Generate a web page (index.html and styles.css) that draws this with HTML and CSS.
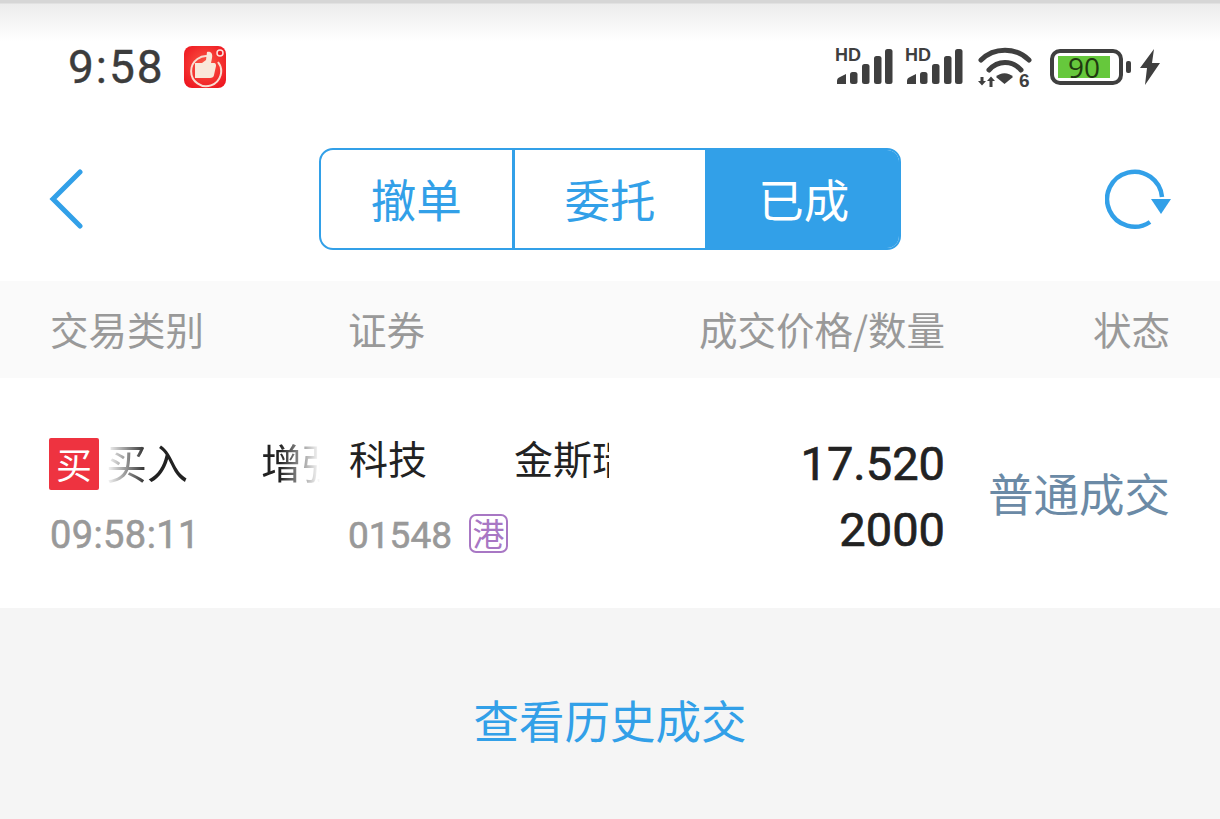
FILE: index.html
```html
<!DOCTYPE html>
<html lang="zh-CN">
<head>
    <meta charset="UTF-8">
    <title>已成</title>
    <link rel="stylesheet" href="styles.css">
</head>
<body>
    <div class="status-bar">
        <div class="status-left">
            <span class="clock">9:58</span>
            <svg class="app-icon" width="42" height="42" viewBox="0 0 42 42">
                <defs>
                    <radialGradient id="appGlow" cx="50%" cy="45%" r="65%">
                        <stop offset="0" stop-color="#fb5a46"/>
                        <stop offset="1" stop-color="#ee1620"/>
                    </radialGradient>
                </defs>
                <rect width="42" height="42" rx="8" fill="url(#appGlow)"/>
                <path d="M27 11A15 15 0 1 0 34 16" fill="none" stroke="#f9dcd0" stroke-width="2"/>
                <path d="M11 17h7l4-3 1-8c4-1 6 2 5 6l-1 5h3c2 0 2 2 2 3l-2 9c0 2-2 3-4 3H11z" fill="#f9e8da"/>
                <circle cx="36" cy="7" r="3" fill="#f01c24" stroke="#fbe3dc" stroke-width="1.5"/>
            </svg>
        </div>
        <div class="status-right">
            <svg class="signal" width="58" height="42" viewBox="0 0 58 42">
                <text x="0" y="15" class="hd-text">HD</text>
                <g fill="#3f3f3f">
                    <path d="M2 38v-3q0-3 3-4l6-3v10z"/>
                    <rect x="15" y="26" width="7.500" height="12" rx="2.500"/>
                    <rect x="27" y="18" width="7.500" height="20" rx="2.500"/>
                    <rect x="39" y="10" width="7.500" height="28" rx="2.500"/>
                    <rect x="50" y="3" width="7.500" height="35" rx="2.500"/>
                </g>
            </svg>
            <svg class="signal" width="58" height="42" viewBox="0 0 58 42">
                <text x="0" y="15" class="hd-text">HD</text>
                <g fill="#3f3f3f">
                    <path d="M2 38v-3q0-3 3-4l6-3v10z"/>
                    <rect x="15" y="26" width="7.500" height="12" rx="2.500"/>
                    <rect x="27" y="18" width="7.500" height="20" rx="2.500"/>
                    <rect x="39" y="10" width="7.500" height="28" rx="2.500"/>
                    <rect x="50" y="3" width="7.500" height="35" rx="2.500"/>
                </g>
            </svg>
            <svg class="wifi" width="54" height="42" viewBox="0 0 54 42">
                <g fill="none" stroke="#3f3f3f" stroke-width="5" stroke-linecap="round">
                    <path d="M3 14C16 1 38 1 51 14"/>
                    <path d="M11 24C20 14 34 14 43 24"/>
                </g>
                <path d="M18 31C22 26 31 26 35 31L26.500 38Z" fill="#3f3f3f"/>
                <path d="M0 35h8l-4 4.500zM2.500 31h3v5h-3z" fill="#3f3f3f"/>
                <path d="M9 35h8l-4-4.500zM11.500 35h3v6h-3z" fill="#3f3f3f"/>
                <text x="41" y="41" class="wifi-six">6</text>
            </svg>
            <div class="battery">
                <div class="battery-body"><span class="battery-level">90</span></div>
                <span class="battery-tip"></span>
            </div>
            <svg class="bolt" width="20" height="36" viewBox="0 0 20 36">
                <path d="M14 0L0 19h7L5 36 20 14h-8z" fill="#3f3f3f"/>
            </svg>
        </div>
    </div>

    <div class="nav">
        <svg class="back" width="34" height="60" viewBox="0 0 34 60">
            <path d="M31 3L4 30l27 27" fill="none" stroke="#32a0e8" stroke-width="5" stroke-linecap="round"/>
        </svg>
        <div class="tabs">
            <span class="tab">撤单</span>
            <span class="tab">委托</span>
            <span class="tab active">已成</span>
        </div>
        <svg class="refresh" width="66" height="62" viewBox="0 0 66 62">
            <path d="M45 54A27.500 27.500 0 1 1 57 29" fill="none" stroke="#32a0e8" stroke-width="4.500"/>
            <path d="M46 31h20L56 46z" fill="#32a0e8"/>
        </svg>
    </div>

    <div class="table-head">
        <span>交易类别</span>
        <span class="col-name">证券</span>
        <span class="right">成交价格/数量</span>
        <span class="right">状态</span>
    </div>

    <div class="trade-row">
        <div class="cell">
            <div class="line">
                <span class="buy-tag">买</span>
                <div class="marquee fade"><span>买入</span><span class="gap-one">增强</span></div>
            </div>
            <div class="sub">09:58:11</div>
        </div>
        <div class="cell">
            <div class="line">
                <div class="marquee-name"><span>科技</span><span class="gap-two">金斯瑞</span></div>
            </div>
            <div class="sub code">01548<span class="hk-tag">港</span></div>
        </div>
        <div class="cell nums">
            <div>17.520</div>
            <div>2000</div>
        </div>
        <div class="cell state">普通成交</div>
    </div>

    <div class="footer">
        <span class="history">查看历史成交</span>
    </div>
</body>
</html>
```

FILE: styles.css
```css
body {
    margin: 0;
    width: 1220px;
    height: 819px;
    overflow: hidden;
    background-color: white;
    font-family: "Noto Sans CJK SC", "Noto Sans", sans-serif;
}

.status-bar {
    height: 112px;
    box-sizing: border-box;
    padding: 40px 60px 0 68px;
    display: flex;
    justify-content: space-between;
    align-items: flex-start;
    background: linear-gradient(#d6d6d6 0, #d6d6d6 3px, #ececec 4px, #fdfdfd 38px, white 42px);
}

.status-left {
    display: flex;
    align-items: center;
    height: 54px;
}

.clock {
    font-family: Roboto, sans-serif;
    font-size: 46px;
    color: #3c3c3c;
    letter-spacing: 2px;
    -webkit-text-stroke: 0.4px #3c3c3c;
}

.app-icon {
    margin-left: 19px;
}

.status-right {
    display: flex;
    align-items: center;
    height: 54px;
}

.signal {
    overflow: visible;
}

.signal + .signal {
    margin-left: 12px;
}

.wifi {
    margin-left: 15px;
    overflow: visible;
}

.hd-text {
    font-family: "Liberation Sans", sans-serif;
    font-size: 18px;
    font-weight: bold;
    fill: #3f3f3f;
}

.wifi-six {
    font-family: "Liberation Sans", sans-serif;
    font-size: 19px;
    font-weight: bold;
    fill: #3f3f3f;
}

.battery {
    display: flex;
    align-items: center;
    margin-left: 18px;
}

.battery-body {
    width: 73px;
    height: 36px;
    padding: 3px 4px;
    box-sizing: border-box;
    border: 4px solid #3f3f3f;
    border-radius: 10px;
}

.battery-level {
    display: block;
    width: 52px;
    height: 22px;
    background-color: #66c83c;
    color: #1f3a10;
    font-family: "Open Sans", sans-serif;
    font-size: 28px;
    line-height: 22px;
    text-align: center;
}

.battery-tip {
    width: 5px;
    height: 12px;
    margin-left: 3px;
    border-radius: 2px;
    background-color: #3f3f3f;
}

.bolt {
    margin-left: 9px;
}

.nav {
    height: 169px;
    box-sizing: border-box;
    padding: 36px 49px 0 49px;
    display: grid;
    grid-template-columns: 1fr 582px 1fr;
    align-items: start;
}

.back {
    margin-top: 21px;
}

.refresh {
    margin-top: 20px;
    justify-self: end;
}

.tabs {
    display: flex;
    height: 102px;
    box-sizing: border-box;
    border: 2.5px solid #32a0e8;
    border-radius: 14px;
    overflow: hidden;
}

.tab {
    flex: 1;
    display: flex;
    align-items: center;
    justify-content: center;
    padding-bottom: 3px;
    font-size: 45.5px;
    color: #32a0e8;
    border-left: 3px solid #32a0e8;
}

.tab:first-child {
    border-left: none;
}

.tab.active {
    background-color: #32a0e8;
    color: white;
}

.table-head {
    height: 97px;
    box-sizing: border-box;
    padding: 0 50px 4px;
    display: grid;
    grid-template-columns: 300px 260px 335px 225px;
    align-items: center;
    background-color: #fafafa;
    color: #999;
    font-size: 38.5px;
}

.col-name {
    margin-left: -2px;
}

.right {
    text-align: right;
}

.trade-row {
    height: 230px;
    box-sizing: border-box;
    padding: 59px 50px 0;
    display: grid;
    grid-template-columns: 300px 260px 335px 225px;
    align-items: start;
}

.line {
    display: flex;
    align-items: center;
    height: 54px;
    color: #222;
}

.buy-tag {
    flex: none;
    width: 50px;
    height: 52px;
    margin-left: -1px;
    border-radius: 2px;
    background-color: #ee3340;
    color: white;
    font-size: 36px;
    line-height: 50px;
    text-align: center;
}

.marquee {
    width: 214px;
    margin: 0 0 6px 7px;
    overflow: hidden;
    white-space: nowrap;
    font-size: 41px;
    line-height: 54px;
    -webkit-mask-image: linear-gradient(90deg, transparent 0, black 42px, black 174px, transparent 214px);
    mask-image: linear-gradient(90deg, transparent 0, black 42px, black 174px, transparent 214px);
}

.marquee-name {
    width: 260px;
    margin: 0 0 14px -1px;
    overflow: hidden;
    white-space: nowrap;
    font-size: 39px;
    line-height: 54px;
}

.gap-one {
    margin-left: 73px;
}

.gap-two {
    margin-left: 87px;
}

.sub {
    margin-top: 22px;
    height: 44px;
    display: flex;
    align-items: center;
    color: #999;
    font-family: Roboto, sans-serif;
    font-size: 38px;
    letter-spacing: 0.4px;
    -webkit-text-stroke: 0.6px #999;
}

.code {
    margin-left: -2px;
    font-size: 37px;
    letter-spacing: 0;
}

.hk-tag {
    width: 39px;
    height: 39px;
    margin: -4px 0 0 17px;
    box-sizing: border-box;
    border: 2px solid #a877c4;
    border-radius: 7px;
    color: #a877c4;
    font-family: "Noto Sans CJK SC", sans-serif;
    font-size: 32px;
    line-height: 33px;
    text-align: center;
    -webkit-text-stroke: 0;
}

.nums {
    margin-top: -6px;
    text-align: right;
    font-family: Roboto, sans-serif;
    font-size: 47px;
    line-height: 66px;
    color: #222;
    -webkit-text-stroke: 0.7px #222;
}

.state {
    margin-top: 25px;
    text-align: right;
    font-size: 45.5px;
    line-height: 60px;
    color: #6b8aa6;
}

.footer {
    height: 211px;
    box-sizing: border-box;
    padding-top: 81px;
    background-color: #f5f5f5;
    text-align: center;
}

.history {
    font-size: 45.5px;
    line-height: 60px;
    color: #32a0e8;
}
```
